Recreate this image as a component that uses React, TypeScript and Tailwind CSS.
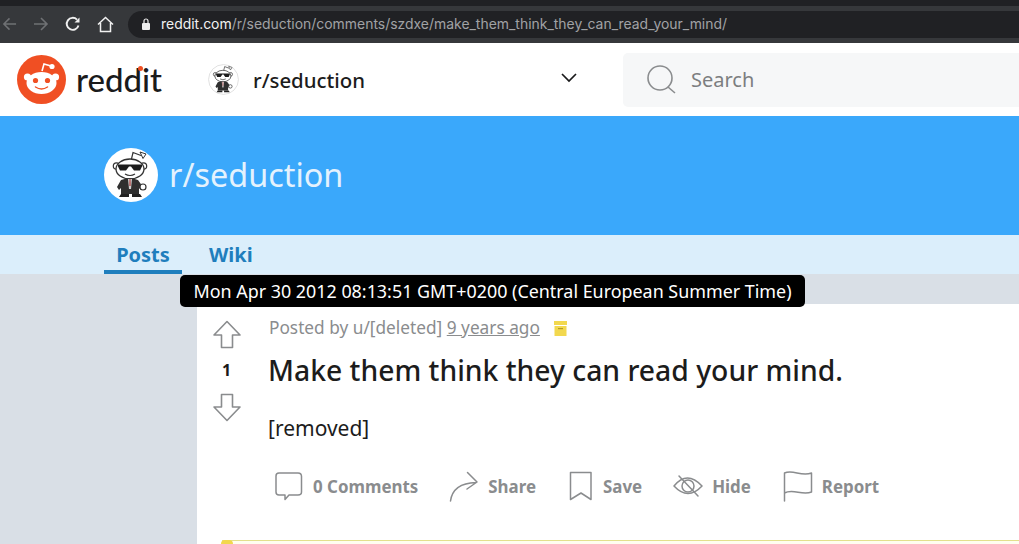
const plex = "font-['Noto_Sans','Open_Sans',sans-serif]";

function Snoo({ size, ring }: { size: number; ring?: boolean }) {
  // community avatar: snoo in shades and a dark suit
  return (
    <svg width={size} height={size} viewBox="0 0 54 54" className="block shrink-0">
      <circle cx="27" cy="27" r={ring ? 26 : 27} fill="#fff" stroke={ring ? "#dcdcdc" : "none"} strokeWidth="1.5" />
      <path d="M27 13 L29 4.5 L37 7.5" fill="none" stroke="#333" strokeWidth="1.2" />
      <path d="M36 4 L42 6 L39 10.5 Z" fill="#fff" stroke="#333" strokeWidth="1" />
      <circle cx="12.5" cy="18" r="3.2" fill="#fff" stroke="#333" strokeWidth="1.2" />
      <circle cx="39.5" cy="18" r="3.2" fill="#fff" stroke="#333" strokeWidth="1.2" />
      <ellipse cx="26" cy="21" rx="14" ry="10" fill="#fff" stroke="#333" strokeWidth="1.3" />
      <path d="M14 16.5 H38 V18.5 L36 22.5 H30 L27 18.5 H25 L22 22.5 H16 L14 18.5 Z" fill="#1c1c1c" />
      <path d="M21 26 Q26 29 31 26" fill="none" stroke="#333" strokeWidth="1.2" />
      <path d="M17 32 Q26 28.5 34 32 L39 39 L37 42 L35 40 L35 46 H17 L17 40 L15 42 L13 39 Z" fill="#2f2f2f" />
      <path d="M24 31 H28 L27 41 H25 Z" fill="#cfcfcf" />
      <path d="M25.5 31 H26.5 L26.6 38 H25.4 Z" fill="#a33" />
      <circle cx="39" cy="39" r="3" fill="#fff" stroke="#333" strokeWidth="1.2" />
      <path d="M17 46 H25 V49 H15 Z M28 46 H36 L38 49 H28 Z" fill="#222" />
    </svg>
  );
}

function RedditMark() {
  return (
    <svg width="49" height="49" viewBox="0 0 49 49" className="block shrink-0">
      <circle cx="24.5" cy="24.5" r="24.5" fill="#f04f23" />
      <path d="M25 16 L27 9 L34 11" fill="none" stroke="#fff" strokeWidth="1.6" />
      <circle cx="35" cy="11.5" r="2.6" fill="#fff" />
      <circle cx="10.5" cy="22" r="3.6" fill="#fff" />
      <circle cx="38.5" cy="22" r="3.6" fill="#fff" />
      <ellipse cx="24.5" cy="28" rx="15" ry="11" fill="#fff" />
      <circle cx="18.5" cy="25.5" r="2.6" fill="#f04f23" />
      <circle cx="30.5" cy="25.5" r="2.6" fill="#f04f23" />
      <path d="M18.5 32 Q24.5 36 30.5 32" fill="none" stroke="#f04f23" strokeWidth="1.5" strokeLinecap="round" />
    </svg>
  );
}

function ActionIcon({ name }: { name: string }) {
  const common = { fill: "none", stroke: "#8a8c8e", strokeWidth: 1.5, strokeLinejoin: "round" as const, strokeLinecap: "round" as const };
  if (name === "comment")
    return (
      <svg width="30" height="32" viewBox="0 0 30 32" className="block">
        <path {...common} d="M5 3 H24 Q27.5 3 27.5 6.5 V22 Q27.5 25 24 25 H15 L11 29.5 V25 H5 Q2 25 2 22 V6 Q2 3 5 3 Z" />
      </svg>
    );
  if (name === "share")
    return (
      <svg width="30" height="32" viewBox="0 0 30 32" className="block">
        <path {...common} d="M1.5 31 C3 20 11 13 27 12.5 M18.5 2.5 L28 12 L18 19" />
      </svg>
    );
  if (name === "save")
    return (
      <svg width="24" height="30" viewBox="0 0 24 30" className="block">
        <path {...common} d="M1.5 1.5 H22 V28.5 L12 22 L1.5 28.5 Z" />
      </svg>
    );
  if (name === "hide")
    return (
      <svg width="30" height="24" viewBox="0 0 30 24" className="block">
        <path {...common} d="M1 12 Q14 -4 29 12 Q15 27 1 12 Z" />
        <circle {...common} cx="15" cy="12" r="6" />
        <path {...common} d="M6 2 L25 22" />
      </svg>
    );
  return (
    <svg width="30" height="32" viewBox="0 0 30 32" className="block">
      <path {...common} d="M1.5 31 V3 C10 -1 18 7 28.5 3 V22 C19 26 10 18 1.5 23" />
    </svg>
  );
}

function Action({ icon, label, className }: { icon: string; label: string; className: string }) {
  return (
    <div className={`flex items-center shrink-0 ${className}`}>
      <ActionIcon name={icon} />
      <span className="text-[16.9px] font-bold text-[#8a8c8e] leading-none pt-[2px]">{label}</span>
    </div>
  );
}

export default function App() {
  return (
    <div className={`relative w-[1019px] h-[544px] overflow-hidden bg-[#d9dfe6] ${plex}`}>
      {/* browser chrome */}
      <div className="h-[43px] bg-[#36383b] border-t-[6px] border-[#202124] flex items-center pb-[1px] font-['Inter',sans-serif]">
        <div className="flex items-center gap-[16px] pl-[2px] pr-[14px] shrink-0">
          <svg width="15" height="16" viewBox="0 0 16 16" fill="none" stroke="#6f7174" strokeWidth="1.6"><path d="M15 8 H2 M8 2 L2 8 L8 14" /></svg>
          <svg width="16" height="16" viewBox="0 0 16 16" fill="none" stroke="#6f7174" strokeWidth="1.6"><path d="M1 8 H14 M8 2 L14 8 L8 14" /></svg>
          <svg width="16" height="16" viewBox="0 0 16 16" fill="none" stroke="#f1f1f1" strokeWidth="1.9"><path d="M13.5 9.5 A6 6 0 1 1 12 3.6" /><path d="M14.5 1.5 V6.5 H9.5 Z" fill="#f1f1f1" stroke="none" /></svg>
          <svg width="17" height="17" viewBox="0 0 17 17" fill="none" stroke="#f1f1f1" strokeWidth="1.5"><path d="M1 8.5 L8.5 1.5 L16 8.5 M3.5 7 V15.5 H13.5 V7" /></svg>
        </div>
        <div className="flex-1 h-[27px] bg-[#202124] rounded-l-full flex items-center pl-[13px] text-[13.95px]">
          <svg width="10" height="12" viewBox="0 0 10 12" className="mr-[10px]"><rect x="1" y="5" width="8" height="7" rx="1" fill="#eee" /><path d="M3 5 V3 A2 2 0 0 1 7 3 V5" fill="none" stroke="#eee" strokeWidth="1.2" /></svg>
          <span className="text-[#f1f1f1]">reddit.com</span>
          <span className="text-[#a0a2a5]">/r/seduction/comments/szdxe/make_them_think_they_can_read_your_mind/</span>
        </div>
      </div>

      {/* site header */}
      <div className="h-[73px] bg-white flex items-center">
        <div className="ml-[17px] shrink-0"><RedditMark /></div>
        <div className="relative ml-[10px] w-[123px] shrink-0 font-['Lato',sans-serif] text-[33px] font-medium leading-none text-[#1a1a1b]">
          reddit
          <div className="absolute left-[62px] top-[3px] w-[5px] h-[5px] rounded-full bg-[#f04f23]" />
        </div>
        <div className="ml-[9px] shrink-0"><Snoo size={31} ring /></div>
        <span className="ml-[14px] pt-[1px] text-[20.4px] font-medium text-[#1c1c1c] w-[307px] shrink-0">r/seduction</span>
        <svg width="16" height="10" viewBox="0 0 16 10" fill="none" stroke="#1a1a1b" strokeWidth="1.7" className="shrink-0 -mt-[3px] ml-[1px]"><path d="M1 1 L8 8 L15 1" /></svg>
        <div className="ml-[46px] flex-1 h-[54px] bg-[#f6f7f8] rounded-l-[5px] flex items-center pl-[24px]">
          <svg width="30" height="30" viewBox="0 0 30 30" fill="none" stroke="#8a8c8e" strokeWidth="1.6"><circle cx="13" cy="13" r="12" /><path d="M21 22 L28 28" /></svg>
          <span className="ml-[14px] pt-[1px] text-[20px] text-[#7c7e80]">Search</span>
        </div>
      </div>

      {/* banner */}
      <div className="h-[119px] bg-[#3aa8fb] flex items-center pl-[104px] pb-[2px]">
        <Snoo size={54} />
        <span className="ml-[11px] text-[32.4px] text-[#e4f2fd] leading-none">r/seduction</span>
      </div>

      {/* tabs */}
      <div className="h-[39px] bg-[#dbeefb] flex pl-[104px] text-[20px] font-bold text-[#1f7ebd]">
        <div className="w-[78px] h-[39px] border-b-[4px] border-[#1f7ebd] flex items-center justify-center pt-[4px]">Posts</div>
        <div className="ml-[27px] flex items-center pt-[1px]">Wiki</div>
      </div>

      {/* post card */}
      <div className="ml-[197px] mt-[30px] bg-white h-[300px] flex flex-col">
        <div className="h-[236px] flex shrink-0">
          <div className="w-[59px] shrink-0 flex flex-col items-center pt-[16px]">
            <svg width="28" height="29" viewBox="0 0 28 29" fill="none" stroke="#8a8c8e" strokeWidth="1.6" strokeLinejoin="round"><path d="M14 1.5 L27 15 H19.5 V27.5 H8.5 V15 H1 Z" /></svg>
            <span className="mt-[11px] text-[16px] font-bold leading-[20px] text-[#1a1a1b]">1</span>
            <svg className="mt-[13px]" width="28" height="29" viewBox="0 0 28 29" fill="none" stroke="#8a8c8e" strokeWidth="1.6" strokeLinejoin="round"><path d="M14 27.5 L27 14 H19.5 V1.5 H8.5 V14 H1 Z" /></svg>
          </div>
          <div className="pl-[12px] flex flex-col">
            <div className="mt-[12px] ml-[1px] h-[24px] flex items-center text-[17.25px] text-[#8a8c8e] whitespace-nowrap">
              <span>Posted by u/[deleted]&nbsp;</span>
              <span className="underline">9 years ago</span>
              <svg className="ml-[13px]" width="15" height="15" viewBox="0 0 15 15"><path d="M1 0 H14 V4 H1 Z M1.5 5 H13.5 V15 H1.5 Z" fill="#f2d84e" /><rect x="5" y="7" width="5" height="1.2" fill="#b39c24" /></svg>
            </div>
            <h1 className="mt-[8px] text-[28.3px] leading-[44px] font-medium text-[#1c1c1c] whitespace-nowrap">Make them think they can read your mind.</h1>
            <p className="mt-[21px] text-[21px] leading-[30px] text-[#1c1c1c]">[removed]</p>
            <div className="mt-[25px] flex items-center h-[36px]">
              <Action icon="comment" label="0 Comments" className="ml-[6px] gap-[9px]" />
              <Action icon="share" label="Share" className="ml-[31px] gap-[9px]" />
              <Action icon="save" label="Save" className="ml-[33px] gap-[10px]" />
              <Action icon="hide" label="Hide" className="ml-[31px] gap-[9px]" />
              <Action icon="report" label="Report" className="ml-[32px] gap-[9px]" />
            </div>
          </div>
        </div>
        {/* archived notice, cut off by the window */}
        <div className="relative ml-[25px] h-[20px] bg-[#fffef0] border-t border-[#e3e08c]">
          <div className="absolute -left-[1px] -top-[1px] w-[12px] h-[4px] rounded-t-[4px] bg-[#f2d84e]" />
        </div>
      </div>

      {/* timestamp tooltip */}
      <div className="absolute left-[180px] top-[275px] w-[625px] h-[32px] bg-black rounded-[5px] flex items-center justify-center text-[17.9px] text-white whitespace-nowrap">
        Mon Apr 30 2012 08:13:51 GMT+0200 (Central European Summer Time)
        <div className="absolute left-[306px] bottom-[-5px] w-[12px] h-[12px] bg-black rotate-45 -z-10" />
      </div>
    </div>
  );
}
